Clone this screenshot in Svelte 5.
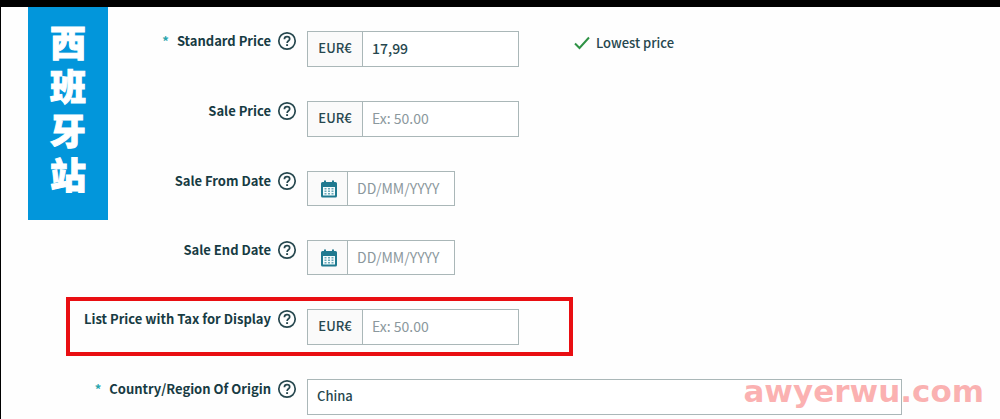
<script>
  const fields = [
    { id: 'standard', label: 'Standard Price', required: true, kind: 'price', value: '17,99', note: 'Lowest price' },
    { id: 'sale', label: 'Sale Price', kind: 'price', value: '' },
    { id: 'from', label: 'Sale From Date', kind: 'date', value: '' },
    { id: 'end', label: 'Sale End Date', kind: 'date', value: '' },
    { id: 'list', label: 'List Price with Tax for Display', kind: 'price', value: '', marked: true },
    { id: 'origin', label: 'Country/Region Of Origin', required: true, kind: 'text', value: 'China' }
  ];
</script>

<div class="page">
  <aside lang="zh">西班牙站</aside>
  <form>
    {#each fields as f (f.id)}
      <div class="row" class:marked={f.marked}>
        <div class="caption">
          {#if f.required}<span class="star">*</span>{/if}
          <label for={f.id}>{f.label}</label>
          <button type="button" class="help" aria-label="Help">
            <svg viewBox="0 0 20 20" width="20" height="20" fill="none" stroke="#26474e" stroke-width="1.7">
              <circle cx="10" cy="10" r="8.2" />
              <path d="M7.4 8.2C7.4 6.5 8.5 5.6 10 5.6s2.7.9 2.7 2.3c0 1.8-2.6 1.9-2.6 4.1" />
              <path d="M10.1 13.2v1.8" stroke-width="1.9" />
            </svg>
          </button>
        </div>
        <div class="box {f.kind}">
          {#if f.kind === 'price'}
            <span class="addon">EUR€</span>
          {:else if f.kind === 'date'}
            <button type="button" class="addon" aria-label="Open calendar">
              <svg viewBox="0 0 18 18" width="18" height="18">
                <path fill="#1f7a90" d="M2.5 2H4V.5h2V2h6V.5h2V2h1.500Q17 2 17 3.500v12.500q0 1.500-1.500 1.500h-13Q1 17.500 1 16V3.500Q1 2 2.500 2z" />
                <path fill="#f4fbfc" d="M3 7h12v8.500H3z" />
                <path fill="#6aa9b8" d="M4.500 8h2v1.500h-2zM8 8h2v1.500H8zM11.500 8h2v1.500h-2zM4.500 10.500h2V12h-2zM8 10.500h2V12H8zM11.500 10.500h2V12h-2zM4.500 13h2v1.500h-2zM8 13h2v1.500H8zM11.500 13h2v1.500h-2z" />
              </svg>
            </button>
          {/if}
          <input
            id={f.id}
            type="text"
            value={f.value}
            placeholder={f.kind === 'price' ? 'Ex: 50.00' : f.kind === 'date' ? 'DD/MM/YYYY' : ''}
          />
        </div>
        {#if f.note}
          <div class="note">
            <svg viewBox="0 0 16 14" width="16" height="14" fill="none" stroke="#2f9245" stroke-width="2">
              <path d="M1 7.500l4.500 4.500L15 1.500" />
            </svg>
            {f.note}
          </div>
        {/if}
      </div>
    {/each}
  </form>
  <div class="watermark">awyerwu.com</div>
</div>

<style>
  :global(body) {
    background: #fefefe;
  }
  .page {
    position: relative;
    display: flex;
    align-items: flex-start;
    box-sizing: border-box;
    border-top: 7px solid #000;
    border-left: 1px solid #000;
    padding-left: 27px;
    color: #26474e;
    font: 500 13px/20px "Noto Sans CJK SC", "Noto Sans", sans-serif;
  }
  aside {
    flex: none;
    box-sizing: border-box;
    width: 80px;
    padding: 12px 22px 25px;
    background: #0296db;
    color: #fff;
    font-size: 36px;
    font-weight: 900;
    line-height: 44px;
    word-break: break-all;
    -webkit-text-stroke: 1px #fff;
  }
  form {
    flex: 1;
    min-width: 0;
    display: flex;
    flex-direction: column;
    gap: 34px;
    padding: 24px 98px 4px 0;
    margin-left: -44px;
  }
  .row {
    position: relative;
    display: flex;
    align-items: flex-start;
  }
  .marked::before {
    content: "";
    position: absolute;
    top: -12px;
    bottom: -11px;
    left: 2px;
    width: 499px;
    border: 4px solid #e90e12;
  }
  .caption {
    flex: none;
    width: 233px;
    margin-right: 10px;
    display: flex;
    align-items: center;
    justify-content: flex-end;
  }
  label {
    font-weight: 700;
    color: #173b43;
  }
  .star {
    margin-right: 8px;
    color: #2aa5ad;
    font-weight: 700;
  }
  .help {
    margin-left: 6px;
    padding: 0;
    border: 0;
    background: none;
    display: flex;
  }
  .box {
    display: flex;
    box-sizing: border-box;
    height: 36px;
    border: 1px solid #aab7b8;
    background: #fff;
  }
  .price {
    width: 212px;
  }
  .date {
    width: 148px;
    height: 35px;
  }
  .text {
    flex: 1;
    min-width: 0;
  }
  .addon {
    flex: none;
    box-sizing: border-box;
    width: 55px;
    display: flex;
    align-items: center;
    justify-content: center;
    padding: 0 0 2px;
    border: 0;
    border-right: 1px solid #aab7b8;
    background: #fafafa;
  }
  .date .addon {
    width: 40px;
    padding: 0 0 0 3px;
  }
  input {
    flex: 1;
    min-width: 0;
    padding: 0 9px 2px;
    border: 0;
    outline: 0;
    background: none;
    color: inherit;
    font: inherit;
    font-size: 14px;
  }
  .text input {
    font-size: 13px;
  }
  input::placeholder {
    color: #8b989d;
    opacity: 1;
    font-weight: 400;
  }
  .note {
    display: flex;
    align-items: center;
    gap: 6px;
    margin: 2px 0 0 55px;
  }
  .watermark {
    position: absolute;
    right: 16px;
    bottom: 8px;
    color: rgba(247, 100, 100, 0.5);
    font: 700 31px/40px "DejaVu Sans", sans-serif;
    pointer-events: none;
  }
</style>
